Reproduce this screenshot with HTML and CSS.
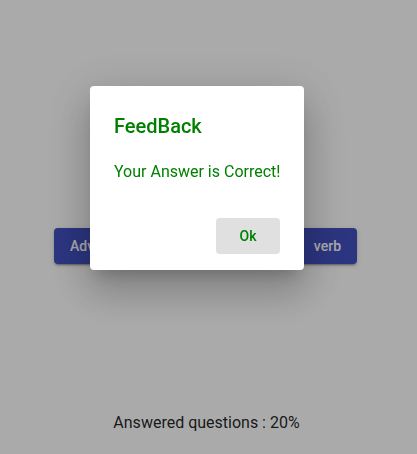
FILE: index.html
```html
<!DOCTYPE html>
<html lang="en">
<head>
<meta charset="utf-8">
<title>Quiz</title>
<link rel="stylesheet" href="styles.css">
</head>
<body>
<main class="page">
  <div class="options">
    <button class="opt">Adverb</button>
    <button class="opt">Noun</button>
    <button class="opt">Adjective</button>
    <button class="opt">verb</button>
  </div>
  <p class="progress">Answered questions : 20%</p>
</main>
<div class="backdrop">
  <div class="dialog" role="dialog">
    <h2 class="dialog-title">FeedBack</h2>
    <div class="dialog-content">Your Answer is Correct!</div>
    <div class="dialog-actions">
      <button class="ok-btn">Ok</button>
    </div>
  </div>
</div>
</body>
</html>
```
FILE: styles.css
```css
html, body {
  margin: 0;
  padding: 0;
  height: 100%;
  background: #fff;
  font-family: Roboto, "Helvetica Neue", sans-serif;
}
.page {
  display: flex;
  flex-direction: column;
  align-items: center;
  padding-top: 228px;
}
.options {
  display: flex;
  gap: 4px;
  margin-left: -6px;
}
.opt {
  font-family: Roboto, sans-serif;
  font-size: 14px;
  font-weight: 500;
  color: #fff;
  background: #4250c0;
  border: 0;
  border-radius: 4px;
  height: 36px;
  padding: 0 16px;
  box-shadow: 0 3px 1px -2px rgba(0,0,0,.2), 0 2px 2px 0 rgba(0,0,0,.14), 0 1px 5px 0 rgba(0,0,0,.12);
}
.progress {
  margin: 149px 0 0;
  padding-right: 4px;
  font-size: 16px;
  line-height: 19px;
  color: rgba(0,0,0,.87);
}
.backdrop {
  position: fixed;
  inset: 0;
  background: rgba(0,0,0,.333);
}
.dialog {
  position: absolute;
  left: 90px;
  top: 86px;
  width: 166px;
  background: #fff;
  border-radius: 4px;
  padding: 24px 24px 16px;
  box-shadow: 0 11px 15px -7px rgba(0,0,0,.2), 0 24px 38px 3px rgba(0,0,0,.14), 0 9px 46px 8px rgba(0,0,0,.12);
}
.dialog-title {
  margin: 0 0 20px;
  font-size: 20px;
  line-height: 32px;
  font-weight: 500;
  color: #008000;
}
.dialog-content {
  font-size: 16px;
  line-height: 20px;
  color: #008000;
  white-space: nowrap;
}
.dialog-actions {
  display: flex;
  justify-content: flex-end;
  margin-top: 36px;
}
.ok-btn {
  font-family: Roboto, sans-serif;
  font-size: 14px;
  font-weight: 500;
  color: #008000;
  background: #e0e0e0;
  border: 0;
  border-radius: 4px;
  width: 64px;
  height: 36px;
  padding: 0;
}
```
